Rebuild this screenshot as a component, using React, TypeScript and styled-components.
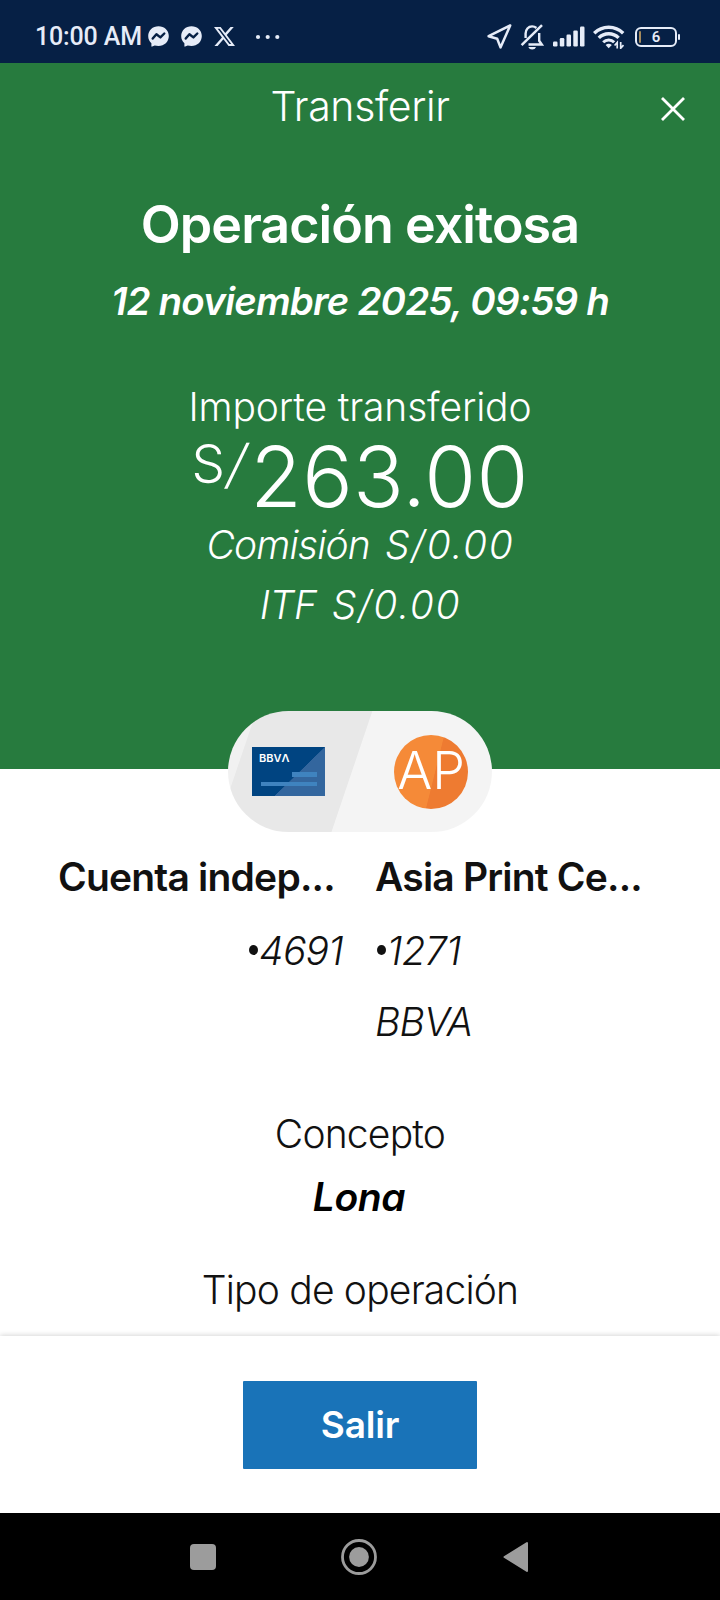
import React from 'react';
import styled, { createGlobalStyle } from 'styled-components';

const GlobalStyle = createGlobalStyle`
  * { box-sizing: border-box; }
  body { margin: 0; background: #fff; font-family: Inter, "Liberation Sans", sans-serif; }
  p, h1, h2 { margin: 0; }
`;

const Screen = styled.main`
  width: 720px;
  height: 1600px;
  display: flex;
  flex-direction: column;
  background: #fff;
  overflow: hidden;
`;

const StatusBar = styled.div`
  height: 63px;
  flex: none;
  padding: 10px 39px 0 35px;
  display: flex;
  align-items: center;
  justify-content: space-between;
  background: #062045;
  color: #e6ecf8;
  font-family: Roboto, "Liberation Sans", sans-serif;
`;

const StatusGroup = styled.div<{ $gap: number }>`
  display: flex;
  align-items: center;
  gap: ${(p) => p.$gap}px;
`;

const Clock = styled.span`
  font-size: 25px;
  font-weight: 500;
  line-height: 30px;
  letter-spacing: -0.15px;
  white-space: nowrap;
  margin-right: -6px;
`;

const Hero = styled.section`
  height: 706px;
  flex: none;
  display: flex;
  flex-direction: column;
  align-items: center;
  background: #277b3e;
  color: #fff;
`;

const HeaderBar = styled.header`
  width: 100%;
  height: 87px;
  display: grid;
  grid-template-columns: 100px 1fr 100px;
  align-items: center;
`;

const ScreenTitle = styled.h2`
  grid-column: 2;
  padding-bottom: 2px;
  text-align: center;
  font-size: 41px;
  font-weight: 300;
  letter-spacing: -0.35px;
`;

const CloseButton = styled.button`
  border: 0;
  padding: 5px 0 0;
  justify-self: end;
  margin-right: 33px;
  background: none;
  display: flex;
`;

const ResultTitle = styled.h1`
  margin-top: 43px;
  font-size: 52px;
  line-height: 64px;
  font-weight: 600;
  letter-spacing: -0.95px;
`;

const ResultDate = styled.p`
  margin-top: 20px;
  font-size: 38.5px;
  line-height: 48px;
  font-weight: 600;
  font-style: italic;
  letter-spacing: -0.8px;
`;

const AmountLabel = styled.p`
  margin-top: 58px;
  font-size: 39px;
  line-height: 48px;
  font-weight: 300;
  letter-spacing: -0.15px;
`;

const Amount = styled.div`
  margin-top: 2px;
  height: 82px;
  display: flex;
  align-items: flex-start;
  font-size: 84px;
  line-height: 88px;
  font-weight: 300;
  letter-spacing: 0.3px;
`;

const Currency = styled.span`
  font-size: 53px;
  line-height: 62px;
  letter-spacing: 0;
  margin-right: 1px;
`;

const Slash = styled.span`
  display: inline-block;
  transform: skewX(-12deg);
  margin: 0 3px 0 3px;
`;

const Fee = styled.p`
  display: flex;
  gap: 15px;
  font-size: 39px;
  line-height: 60px;
  font-weight: 300;
  font-style: italic;
`;

const FeeName = styled.span<{ $tight?: boolean }>`
  letter-spacing: ${(p) => (p.$tight ? '-0.8px' : '-0.3px')};
`;

const FeeValue = styled.span`
  letter-spacing: 1.7px;
  margin-right: -1px;
`;

const Pill = styled.div`
  position: relative;
  width: 264px;
  height: 121px;
  flex: none;
  margin: -58px auto 0;
  padding: 0 24px;
  border-radius: 61px;
  display: flex;
  align-items: center;
  justify-content: space-between;
  background: linear-gradient(108.7deg, #f1f1f1 9.2%, #e8e8e8 9.5%, #e8e8e8 47.2%, #f4f4f4 47.5%);
`;

const BankCard = styled.div`
  width: 73px;
  height: 49px;
  padding: 6px 0 0 7px;
  background:
    linear-gradient(#3f83bf, #3f83bf) 9px 35px / 56px 4px no-repeat,
    linear-gradient(#3f83bf, #3f83bf) 40px 25px / 25px 5px no-repeat,
    linear-gradient(135.8deg, transparent 58.8%, #33669e 59.4%),
    #004481;
  color: #fff;
  font-size: 11px;
  font-weight: 600;
  line-height: 10px;
  letter-spacing: 0;
`;

const Avatar = styled.div`
  width: 74px;
  height: 74px;
  padding-bottom: 3px;
  border-radius: 50%;
  display: flex;
  align-items: center;
  justify-content: center;
  background: linear-gradient(104deg, #f58a38 54%, #ee7b31 54.8%);
  color: #fff;
  font-size: 52px;
  font-weight: 300;
`;

const Accounts = styled.section`
  margin-top: 21px;
  padding-left: 58px;
  display: grid;
  grid-template-columns: 285px 1fr;
  column-gap: 32px;
`;

const Account = styled.div<{ $end?: boolean }>`
  display: flex;
  flex-direction: column;
  align-items: ${(p) => (p.$end ? 'flex-end' : 'flex-start')};
  color: #111;
  font-size: 39px;
  line-height: 48px;
`;

const AccountName = styled.h2`
  align-self: flex-start;
  font-size: 39px;
  font-weight: 600;
  letter-spacing: -0.8px;
  white-space: nowrap;
`;

const AccountNumber = styled.p`
  margin-top: 26px;
  font-weight: 300;
  font-style: italic;
  letter-spacing: -0.7px;
  display: flex;
`;

const Bullet = styled.span`
  width: 9px;
  height: 10px;
  margin: 18px 1px 0 2px;
  border-radius: 50%;
  background: #111;
`;

const BankName = styled.p`
  margin-top: 23px;
  font-weight: 300;
  font-style: italic;
  letter-spacing: -0.8px;
`;

const Details = styled.section`
  flex: 1;
  padding-top: 64px;
  display: flex;
  flex-direction: column;
  align-items: center;
  font-size: 39px;
  line-height: 48px;
`;

const DetailLabel = styled.p`
  font-weight: 300;
  letter-spacing: -0.8px;
  color: #111;
`;

const DetailValue = styled.p`
  margin: 15px 2px 45px 0;
  font-weight: 600;
  font-style: italic;
  letter-spacing: -0.4px;
  color: #000;
`;

const Footer = styled.footer`
  height: 177px;
  flex: none;
  display: flex;
  align-items: center;
  justify-content: center;
  background: #fff;
  box-shadow: 0 -1px 5px rgba(0, 0, 0, 0.16);
`;

const ExitButton = styled.button`
  width: 234px;
  height: 88px;
  border: 0;
  border-radius: 1px;
  background: #1973b8;
  color: #fff;
  font-family: inherit;
  font-size: 37px;
  font-weight: 600;
  letter-spacing: -0.2px;
`;

const NavBar = styled.nav`
  height: 87px;
  flex: none;
  padding: 0 192px 0 189px;
  display: grid;
  grid-template-columns: 152px 1fr auto;
  align-items: center;
  background: #000;
`;

const MessengerIcon = () => (
  <svg width="21" height="21" viewBox="0 0 21 21">
    <path d="M10.5 0.2C4.7 0.2 .2 4.4 .2 10c0 3 1.200 5.500 3.200 7.300v2.800c0 .5.4.7.8.5l2.500-1.100c1.200.3 2.500.5 3.800.5 5.800 0 10.300-4.200 10.300-10S16.300.2 10.500.2Z" fill="#e6ecf8" />
    <path d="M4.700 12.600 8.400 8.200l4 3.200 3.900-3.900" fill="none" stroke="#062045" strokeWidth="2.400" strokeLinejoin="round" strokeLinecap="round" />
  </svg>
);

const XIcon = () => (
  <svg width="21" height="21" viewBox="0 0 24 24" fill="#e6ecf8">
    <path d="M18.901 1.153h3.680l-8.040 9.190L24 22.846h-7.406l-5.800-7.584-6.638 7.584H.474l8.600-9.830L0 1.154h7.594l5.243 6.932ZM17.610 20.644h2.039L6.486 3.240H4.298Z" />
  </svg>
);

const MoreIcon = () => (
  <svg width="33" height="6" viewBox="-8 0 33 6" fill="#e6ecf8">
    <circle cx="3" cy="3" r="2.100" /><circle cx="12.700" cy="3" r="2.100" /><circle cx="22.300" cy="3" r="2.100" />
  </svg>
);

const LocationIcon = () => (
  <svg width="25" height="25" viewBox="0 0 25 25" fill="none" stroke="#e6ecf8" strokeWidth="2.500" strokeLinejoin="round">
    <path d="M23.200 1.400 1.600 12.200l8.600 2.600 3.300 8.600Z" />
  </svg>
);

const MutedBellIcon = () => (
  <svg width="25" height="26" viewBox="0 0 25 26" fill="none" stroke="#e6ecf8" strokeWidth="2.400">
    <path d="M5.600 14V9.500C5.600 5.500 8.300 2.400 12.100 2.400c1.700 0 3.200.6 4.300 1.600M19.200 9v7.800l2.600 3.700H8.500" />
    <path d="M1.600 21.200 22 1.200" strokeWidth="2.500" />
    <path d="M8.400 23h7.600c-.6 1.700-2 2.500-3.800 2.500S9 24.700 8.400 23Z" fill="#e6ecf8" stroke="none" />
  </svg>
);

const SignalIcon = () => (
  <svg width="32" height="21" viewBox="0 0 32 21" fill="#e6ecf8">
    <rect x="0" y="15.500" width="4.500" height="5" rx="1.200" />
    <rect x="6.800" y="12" width="4.500" height="8.500" rx="1.200" />
    <rect x="13.500" y="8.500" width="4.500" height="12" rx="1.200" />
    <rect x="20.300" y="4.500" width="4.500" height="16" rx="1.200" />
    <rect x="27" y=".5" width="4.500" height="20" rx="1.200" />
  </svg>
);

const WifiIcon = () => (
  <svg width="32" height="24" viewBox="0 0 32 24" fill="none" stroke="#e6ecf8" strokeWidth="3.400">
    <path d="M1.200 8.300a20.500 20.500 0 0 1 29 0" />
    <path d="M5.800 12.900a14 14 0 0 1 19.800 0" />
    <path d="M10.200 17.200a7.800 7.800 0 0 1 11 0" strokeWidth="3" />
    <path d="M15.700 23.300 12.600 20q3.100-2.600 6.200 0Z" fill="#e6ecf8" stroke="none" />
    <path d="M24.200 23.500v-6l-2.600 3M27.700 17v6.200l2.800-3" strokeWidth="1.700" />
  </svg>
);

const Battery = styled.div`
  position: relative;
  width: 42px;
  height: 20px;
  margin: 0 4px 0 2px;
  border: 2px solid #e6ecf8;
  border-radius: 6px;
  display: flex;
  align-items: center;
  justify-content: center;
  font-size: 15px;
  line-height: 16px;
  font-weight: 600;
  &::before {
    content: '';
    position: absolute;
    left: 2px;
    top: 2px;
    width: 2px;
    height: 12px;
    border-radius: 1px;
    background: #a58a5c;
  }
  &::after {
    content: '';
    position: absolute;
    right: -5px;
    top: 5px;
    width: 2px;
    height: 6px;
    border-radius: 1px;
    background: #e6ecf8;
  }
`;

export default function App() {
  return (
    <Screen>
      <GlobalStyle />
      <StatusBar>
        <StatusGroup $gap={12}>
          <Clock>10:00 AM</Clock>
          <MessengerIcon />
          <MessengerIcon />
          <XIcon />
          <MoreIcon />
        </StatusGroup>
        <StatusGroup $gap={8}>
          <LocationIcon />
          <MutedBellIcon />
          <SignalIcon />
          <WifiIcon />
          <Battery>6</Battery>
        </StatusGroup>
      </StatusBar>

      <Hero>
        <HeaderBar>
          <ScreenTitle>Transferir</ScreenTitle>
          <CloseButton aria-label="Cerrar">
            <svg width="28" height="28" viewBox="0 0 28 28" stroke="#fff" strokeWidth="2.800">
              <path d="M3 3l22 22M25 3 3 25" />
            </svg>
          </CloseButton>
        </HeaderBar>
        <ResultTitle>Operación exitosa</ResultTitle>
        <ResultDate>12 noviembre 2025, 09:59 h</ResultDate>
        <AmountLabel>Importe transferido</AmountLabel>
        <Amount>
          <Currency>S<Slash>/</Slash></Currency>
          263.00
        </Amount>
        <Fee><FeeName $tight>Comisión</FeeName><FeeValue>S/0.00</FeeValue></Fee>
        <Fee><FeeName>ITF</FeeName><FeeValue>S/0.00</FeeValue></Fee>
      </Hero>

      <Pill>
        <BankCard>BBVΛ</BankCard>
        <Avatar>AP</Avatar>
      </Pill>

      <Accounts>
        <Account $end>
          <AccountName>Cuenta indep...</AccountName>
          <AccountNumber><Bullet />4691</AccountNumber>
        </Account>
        <Account>
          <AccountName>Asia Print Ce...</AccountName>
          <AccountNumber><Bullet />1271</AccountNumber>
          <BankName>BBVA</BankName>
        </Account>
      </Accounts>

      <Details>
        <DetailLabel>Concepto</DetailLabel>
        <DetailValue>Lona</DetailValue>
        <DetailLabel>Tipo de operación</DetailLabel>
      </Details>

      <Footer>
        <ExitButton>Salir</ExitButton>
      </Footer>

      <NavBar>
        <svg width="28" height="28" viewBox="0 0 28 28"><rect x="1" y="1" width="26" height="26" rx="4" fill="#9c9c9c" /></svg>
        <svg width="36" height="36" viewBox="0 0 36 36">
          <circle cx="18" cy="18" r="16.500" fill="none" stroke="#9c9c9c" strokeWidth="2.800" />
          <circle cx="18" cy="18" r="9.900" fill="#9c9c9c" />
        </svg>
        <svg width="25" height="32" viewBox="0 0 25 32"><path d="M24 2v28L1.500 16Z" fill="#9c9c9c" stroke="#9c9c9c" strokeWidth="2" strokeLinejoin="round" /></svg>
      </NavBar>
    </Screen>
  );
}
